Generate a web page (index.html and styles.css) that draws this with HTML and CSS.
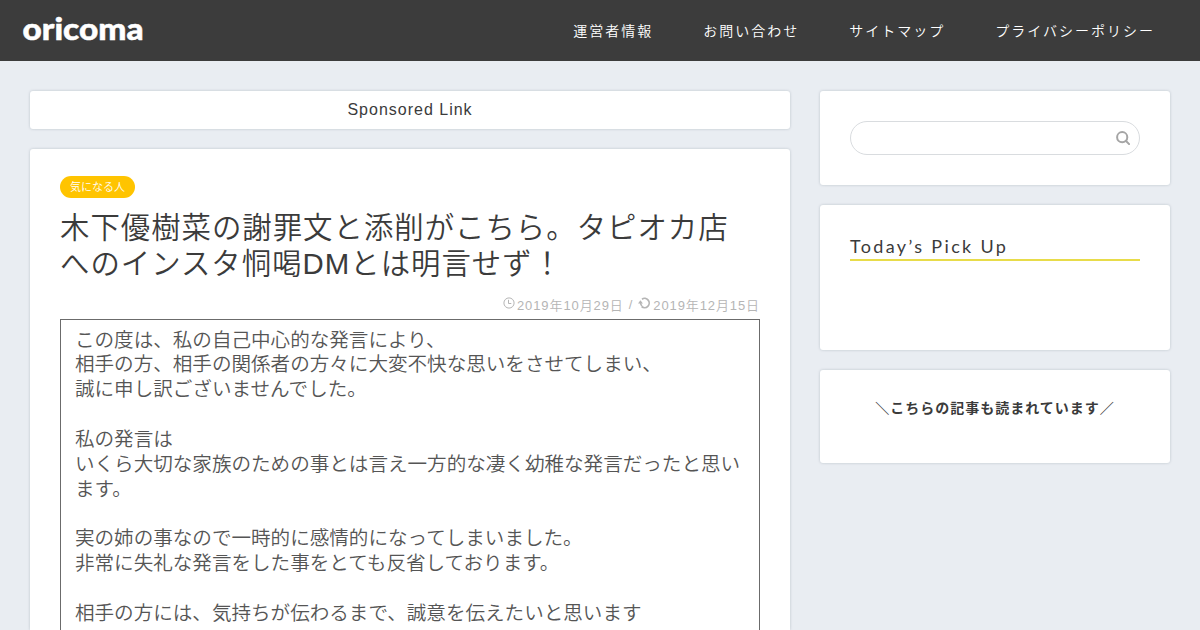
FILE: index.html
```html
<!DOCTYPE html>
<html lang="ja">
<head>
    <meta charset="UTF-8">
    <meta name="viewport" content="width=device-width, initial-scale=1.0">
    <title>oricoma</title>
    <link rel="stylesheet" href="styles.css">
</head>
<body>
    <header class="header">
        <a class="logo" href="#">
            <svg width="124" height="40" viewBox="0 0 124 40">
                <text x="0.5" y="30" textLength="121" lengthAdjust="spacingAndGlyphs">oricoma</text>
            </svg>
        </a>
        <nav class="nav">
            <a href="#">運営者情報</a>
            <a href="#">お問い合わせ</a>
            <a href="#">サイトマップ</a>
            <a href="#">プライバシーポリシー</a>
        </nav>
    </header>

    <div class="contents">
        <main class="main">
            <div class="card sponsored">Sponsored Link</div>
            <article class="card post">
                <a class="category" href="#">気になる人</a>
                <h1>木下優樹菜の謝罪文と添削がこちら。タピオカ店へのインスタ恫喝DMとは明言せず！</h1>
                <div class="meta">
                    <svg class="icon" viewBox="0 0 12 12" fill="none" stroke="currentColor">
                        <circle cx="6" cy="6" r="5.1"/>
                        <path d="M5.5 2.8v3.7h2.8"/>
                    </svg>
                    <span>2019年10月29日</span>
                    <span class="slash">/</span>
                    <svg class="icon update" viewBox="0 0 13 12" fill="none" stroke="currentColor">
                        <path d="M4 2.2a4.6 4.6 0 1 1-.4 7.3" stroke-width="1.7"/>
                        <path d="M0 6.4 2.4 3.2 5 6.4z" fill="currentColor" stroke="none"/>
                        <path d="M2.5 6q.2 1.7 1.4 3" stroke-width="1.6"/>
                    </svg>
                    <span>2019年12月15日</span>
                </div>
                <div class="letter">
                    <p>この度は、私の自己中心的な発言により、<br>相手の方、相手の関係者の方々に大変不快な思いをさせてしまい、<br>誠に申し訳ございませんでした。</p>
                    <p>私の発言は<br>いくら大切な家族のための事とは言え一方的な凄く幼稚な発言だったと思い<br>ます。</p>
                    <p>実の姉の事なので一時的に感情的になってしまいました。<br>非常に失礼な発言をした事をとても反省しております。</p>
                    <p>相手の方には、気持ちが伝わるまで、誠意を伝えたいと思います</p>
                </div>
            </article>
        </main>

        <aside class="sidebar">
            <div class="card search">
                <form class="search-form">
                    <input type="text" aria-label="検索">
                    <button type="button" aria-label="検索">
                        <svg width="14" height="14" viewBox="0 0 14 14" fill="none" stroke="currentColor" stroke-width="2">
                            <circle cx="6.2" cy="6.2" r="5.1"/>
                            <path d="m9.8 9.8 3.3 3.3" stroke-linecap="round"/>
                        </svg>
                    </button>
                </form>
            </div>
            <div class="card pickup">
                <h2>Today’s Pick Up</h2>
            </div>
            <div class="card related">＼こちらの記事も読まれています／</div>
        </aside>
    </div>
</body>
</html>
```
FILE: styles.css
```css
* {
    box-sizing: border-box;
}
body {
    margin: 0;
    height: 630px;
    overflow: hidden;
    background: #e9edf2;
    color: #3b3b3b;
    font-family: "Liberation Sans", "Noto Sans CJK JP", sans-serif;
    letter-spacing: 1px;
}
a {
    color: inherit;
    text-decoration: none;
}
.header {
    display: flex;
    align-items: center;
    justify-content: space-between;
    height: 61px;
    padding: 0 45px 2px 22px;
    background: #3c3c3c;
    color: #fff;
}
.logo svg {
    display: block;
    fill: #fff;
    stroke: #fff;
    stroke-width: 0.5px;
    font-family: Lato, sans-serif;
    font-size: 30px;
    font-weight: 900;
    letter-spacing: 0;
}
.nav {
    display: flex;
    gap: 50px;
    font-size: 14px;
    font-weight: 350;
    letter-spacing: 2px;
}
.contents {
    display: flex;
    align-items: flex-start;
    gap: 30px;
    height: 569px;
    padding: 30px 30px 0;
}
.main {
    width: 760px;
}
.sidebar {
    width: 350px;
}
.card {
    margin-bottom: 20px;
    background: #fff;
    border-radius: 3px;
    box-shadow: 0 0 3px rgba(0, 30, 50, 0.2);
}
.sponsored {
    height: 38px;
    line-height: 37px;
    font-size: 16px;
    text-align: center;
}
.post {
    height: 481px;
    margin-bottom: 0;
    padding: 27px 30px 0;
    border-radius: 3px 3px 0 0;
}
.category {
    display: block;
    width: 75px;
    height: 22px;
    border-radius: 11px;
    background: #ffc400;
    color: #fff;
    font-size: 11px;
    font-weight: 350;
    line-height: 22px;
    text-align: center;
    letter-spacing: 0;
}
h1 {
    margin: 12px 0 0;
    padding-right: 20px;
    font-size: 29.4px;
    font-weight: 350;
    line-height: 36px;
}
.meta {
    display: flex;
    align-items: center;
    justify-content: flex-end;
    height: 20px;
    margin: 12px 0 5px;
    color: #b5b5b5;
    font-size: 13px;
    font-weight: 350;
    letter-spacing: 0.9px;
}
.icon {
    width: 12px;
    height: 12px;
    margin: 0 2px 2px 0;
}
.update {
    width: 13px;
}
.slash {
    margin: 0 5px;
}
.letter {
    height: 311px;
    padding: 6.6px 14px 0;
    border: 1px solid #6b6b6b;
    border-bottom: 0;
    color: #555;
    font-family: "Noto Sans CJK JP", sans-serif;
    font-size: 19.57px;
    font-weight: 350;
    line-height: 24.85px;
    letter-spacing: 0;
    white-space: nowrap;
}
.letter p {
    margin: 0 0 24.85px;
}
.letter p:last-child {
    margin-bottom: 0;
}
.search {
    height: 94px;
    padding: 30px;
}
.search-form {
    display: flex;
    align-items: center;
    height: 34px;
    padding: 0 9px 0 15px;
    border: 1px solid #d9dcdf;
    border-radius: 17px;
}
.search-form input {
    flex: 1;
    min-width: 0;
    border: 0;
    outline: 0;
    background: none;
}
.search-form button {
    display: flex;
    padding: 0;
    border: 0;
    background: none;
    color: #a5a5a5;
}
.pickup {
    height: 145px;
    padding: 30px;
}
.pickup h2 {
    height: 26px;
    margin: 0;
    border-bottom: 2px solid #e8dc4a;
    font-family: Lato, sans-serif;
    font-size: 18px;
    font-weight: 400;
    line-height: 23px;
    letter-spacing: 2.35px;
}
.related {
    height: 93px;
    padding-top: 27px;
    font-family: "Noto Sans CJK JP", sans-serif;
    font-size: 14px;
    font-weight: bold;
    line-height: 20px;
    text-align: center;
}
```
